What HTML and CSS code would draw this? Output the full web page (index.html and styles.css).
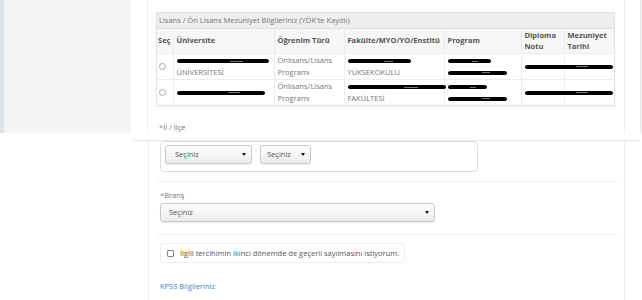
FILE: index.html
```html
<!DOCTYPE html>
<html lang="tr">
<head>
<meta charset="utf-8">
<link rel="stylesheet" href="styles.css">
</head>
<body>
<div class="top">
  <div class="sidebar"></div>
  <div class="main">
    <div class="panel-top">
      <div class="yok">
        <div class="yok-title">Lisans / Ön Lisans Mezuniyet Bilgileriniz (YÖK'te Kayıtlı)</div>
        <table class="grid">
          <colgroup>
            <col class="c1"><col class="c2"><col class="c3"><col class="c4"><col class="c5"><col class="c6"><col class="c7">
          </colgroup>
          <thead>
            <tr>
              <th>Seç</th><th>Üniversite</th><th>Öğrenim Türü</th><th>Fakülte/MYO/YO/Enstitü</th><th>Program</th><th>Diploma Notu</th><th>Mezuniyet Tarihi</th>
            </tr>
          </thead>
          <tbody>
            <tr>
              <td><span class="radio"></span></td>
              <td><span class="ink w92"></span><br>ÜNİVERSİTESİ</td>
              <td>Önlisans/Lisans<br>Programı</td>
              <td><span class="ink w63"></span><br>YÜKSEKOKULU</td>
              <td><span class="ink w43"></span><br><span class="ink w59"></span></td>
              <td><span class="ink w88"></span></td>
              <td></td>
            </tr>
            <tr>
              <td><span class="radio"></span></td>
              <td><span class="ink w88"></span></td>
              <td>Önlisans/Lisans<br>Programı</td>
              <td><span class="ink w98"></span><br>FAKÜLTESİ</td>
              <td><span class="ink w39"></span><br><span class="ink w59"></span></td>
              <td><span class="ink w88"></span></td>
              <td></td>
            </tr>
          </tbody>
        </table>
      </div>
      <div class="label il-label"><span class="req">*</span>İl / İlçe</div>
    </div>
    <div class="gap"></div>
    <div class="edge"></div>
  </div>
</div>
<div class="bottom">
  <div class="panel-bot">
    <div class="ilbox">
      <div class="select s-il">Seçiniz<span class="caret"></span></div>
      <div class="select s-ilce">Seçiniz<span class="caret"></span></div>
    </div>
    <div class="rule"></div>
    <div class="label brans-label"><span class="req">*</span>Branş</div>
    <div class="select s-brans">Seçiniz<span class="caret"></span></div>
    <div class="rule rule2"></div>
    <div class="checkbox-box"><span class="check"></span>İlgili tercihimin ikinci dönemde de geçerli sayılmasını istiyorum.</div>
    <div class="kpss">KPSS Bilgileriniz</div>
  </div>
</div>
</body>
</html>
```
FILE: styles.css
```css
html, body {
  margin: 0;
  padding: 0;
}
body {
  width: 642px;
  height: 300px;
  overflow: hidden;
  background: #fff;
  font-family: "Open Sans", "DejaVu Sans", sans-serif;
  font-size: 7.5px;
  color: #666;
}
.top {
  display: flex;
  height: 133px;
}
.sidebar {
  width: 131px;
  box-sizing: border-box;
  background: #f4f5f7;
  border-left: 4px solid #dfe2e6;
}
.main {
  flex: 1;
  display: flex;
  background: #fff;
}
.panel-top {
  margin-left: 16px;
  width: 478px;
  box-sizing: border-box;
  border-left: 1px solid #eef0f2;
  border-right: 1px solid #eef0f2;
  padding: 12px 0 0 8px;
}
.gap {
  width: 15px;
}
.edge {
  flex: 1;
  background: #f6f7f8;
  border-left: 1px solid #e6e8ea;
}
.yok {
  width: 459px;
  border: 1px solid #e4e4e4;
  box-sizing: border-box;
  box-shadow: 0 1px 2px rgba(0,0,0,0.06);
}
.yok-title {
  height: 16px;
  line-height: 15px;
  background: #eeeeee;
  padding-left: 2px;
  color: #777;
  border-bottom: 1px solid #e2e2e2;
  box-sizing: border-box;
}
.grid {
  width: 457px;
  border-collapse: collapse;
  table-layout: fixed;
}
.c1 { width: 16px; }
.c2 { width: 101px; }
.c3 { width: 70px; }
.c4 { width: 100px; }
.c5 { width: 77px; }
.c6 { width: 43px; }
.c7 { width: 50px; }
.grid th, .grid td {
  border: 1px solid #ececec;
  padding: 0 3px;
  text-align: left;
  vertical-align: middle;
  line-height: 11.5px;
  overflow: visible;
  white-space: nowrap;
}
.grid th:first-child, .grid td:first-child {
  padding-left: 1px;
  border-left: none;
}
.grid th:last-child, .grid td:last-child {
  border-right: none;
}
.grid th {
  height: 24px;
  background: #f7f7f7;
  font-weight: 700;
  color: #555;
  white-space: normal;
}
.grid thead tr th { border-top: none; }
.grid td {
  height: 25px;
  background: #fff;
  color: #777;
}
.grid tbody tr:last-child td { border-bottom: none; }
.radio {
  display: inline-block;
  width: 5px;
  height: 5px;
  border: 1px solid #aaa;
  border-radius: 50%;
  margin-left: 1px;
  vertical-align: middle;
}
.ink {
  display: inline-block;
  height: 4px;
  background: #000;
  border-radius: 3px / 2px;
  vertical-align: middle;
  position: relative;
}
.ink::after {
  content: "";
  position: absolute;
  left: 58%;
  top: 1.5px;
  width: 14%;
  height: 1px;
  background: #777;
}
.w39 { width: 39px; }
.w43 { width: 43px; }
.w59 { width: 59px; }
.w63 { width: 63px; }
.w88 { width: 88px; }
.w92 { width: 92px; }
.w98 { width: 98px; }
.label {
  color: #777;
  line-height: 11px;
}
.req {
  color: #a77;
}
.il-label {
  margin-top: 16px;
  padding-left: 3px;
}
.bottom {
  margin-top: 7px;
  margin-left: 133px;
  width: 507px;
  height: 160px;
  box-sizing: border-box;
  border-top: 1px solid #e9e9e9;
}
.panel-bot {
  margin-left: 15px;
  width: 477px;
  height: 159px;
  box-sizing: border-box;
  border-left: 1px solid #eceef0;
  border-right: 1px solid #eceef0;
  padding-left: 11px;
}
.ilbox {
  width: 318px;
  height: 31px;
  box-sizing: border-box;
  border: 1px solid #dedede;
  border-radius: 4px;
  padding: 3px 4px;
  display: flex;
  gap: 8px;
}
.select {
  position: relative;
  height: 19px;
  box-sizing: border-box;
  border: 1px solid #c9c9c9;
  border-radius: 3px;
  background: linear-gradient(#ffffff, #ebebeb);
  box-shadow: 0 1px 1px rgba(0,0,0,0.08);
  line-height: 17px;
  color: #555;
  padding-left: 9px;
}
.caret {
  position: absolute;
  right: 5px;
  top: 7px;
  width: 0;
  height: 0;
  border-left: 2.5px solid transparent;
  border-right: 2.5px solid transparent;
  border-top: 3px solid #111;
}
.s-il { width: 87px; }
.s-ilce { width: 51px; padding-left: 6px; }
.s-brans { width: 275px; padding-left: 8px; }
.rule {
  margin: 9px 0 0 -3px;
  width: 460px;
  height: 1px;
  background: #efefef;
}
.brans-label {
  margin-top: 8px;
}
.s-brans {
  margin-top: 2px;
}
.rule2 {
  margin-top: 12px;
}
.checkbox-box {
  margin-top: 8px;
  width: 245px;
  height: 20px;
  box-sizing: border-box;
  border: 1px solid #ececec;
  border-radius: 3px;
  display: flex;
  align-items: center;
  padding-left: 6px;
  color: #555;
}
.check {
  width: 5px;
  height: 5px;
  border: 1px solid #888;
  border-radius: 1px;
  margin-right: 6px;
}
.kpss {
  margin-top: 18px;
  color: #3f7fbf;
  line-height: 11px;
}
```
